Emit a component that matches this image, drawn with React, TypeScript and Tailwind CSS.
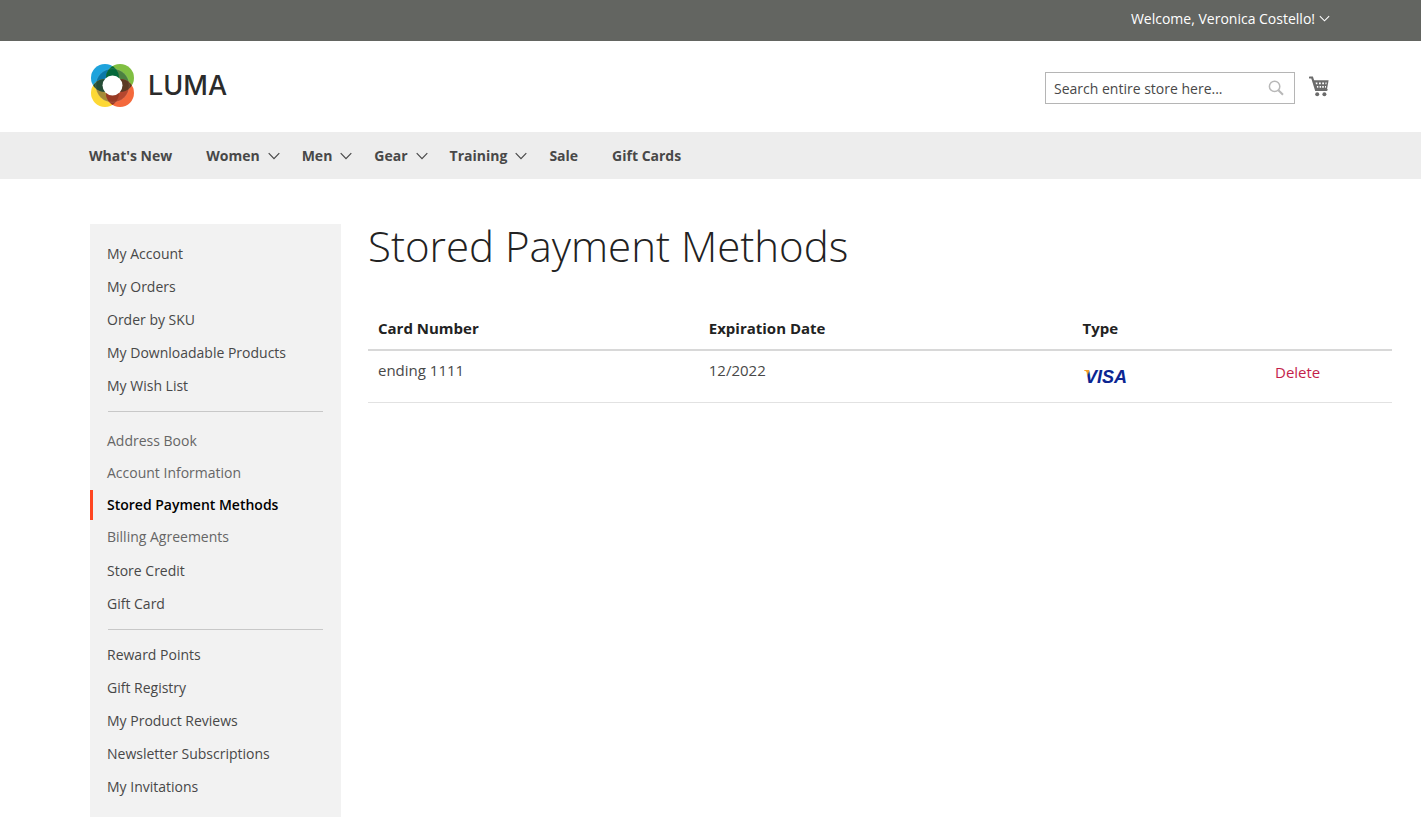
import React from 'react';

type NavItem = { label: string; hasMenu?: boolean };
type AccountLink = { label: string; tone?: 'section' | 'active' };

const navItems: NavItem[] = [
  { label: "What's New" },
  { label: 'Women', hasMenu: true },
  { label: 'Men', hasMenu: true },
  { label: 'Gear', hasMenu: true },
  { label: 'Training', hasMenu: true },
  { label: 'Sale' },
  { label: 'Gift Cards' },
];

const accountLinks: AccountLink[] = [
  { label: 'My Account' },
  { label: 'My Orders' },
  { label: 'Order by SKU' },
  { label: 'My Downloadable Products' },
  { label: 'My Wish List' },
];

const settingsLinks: AccountLink[] = [
  { label: 'Address Book', tone: 'section' },
  { label: 'Account Information', tone: 'section' },
  { label: 'Stored Payment Methods', tone: 'active' },
  { label: 'Billing Agreements', tone: 'section' },
];

const creditLinks: AccountLink[] = [{ label: 'Store Credit' }, { label: 'Gift Card' }];

const activityLinks: AccountLink[] = [
  { label: 'Reward Points' },
  { label: 'Gift Registry' },
  { label: 'My Product Reviews' },
  { label: 'Newsletter Subscriptions' },
  { label: 'My Invitations' },
];

function Chevron({ className }: { className: string }) {
  return (
    <svg viewBox="0 0 12 8" className={className} fill="none" stroke="currentColor" strokeWidth="1.2" aria-hidden="true">
      <path d="M0.7 1.2 6 6.6l5.3-5.4" />
    </svg>
  );
}

function LumaMark() {
  return (
    <svg viewBox="0 0 43 43" className="size-[43px]" aria-hidden="true">
      <defs>
        <clipPath id="tl"><circle cx="14" cy="14" r="14" /></clipPath>
        <clipPath id="tr"><circle cx="29" cy="14" r="14" /></clipPath>
        <clipPath id="bl"><circle cx="14" cy="29" r="14" /></clipPath>
        <clipPath id="br"><circle cx="29" cy="29" r="14" /></clipPath>
        <clipPath id="ring"><circle cx="21.5" cy="21.5" r="16.8" /></clipPath>
      </defs>
      <circle cx="14" cy="14" r="14" fill="#1ea3dc" />
      <circle cx="29" cy="14" r="14" fill="#80bf42" />
      <circle cx="14" cy="29" r="14" fill="#fdd835" />
      <circle cx="29" cy="29" r="14" fill="#f4693c" />
      <g clipPath="url(#ring)">
        <circle cx="14" cy="14" r="14" fill="#0b78a8" />
        <circle cx="29" cy="14" r="14" fill="#4c8040" />
        <circle cx="14" cy="29" r="14" fill="#a58a36" />
        <circle cx="29" cy="29" r="14" fill="#b5472e" />
      </g>
      <g clipPath="url(#tl)"><circle cx="29" cy="14" r="14" fill="#04683a" /></g>
      <g clipPath="url(#tl)"><circle cx="14" cy="29" r="14" fill="#254d37" /></g>
      <g clipPath="url(#br)"><circle cx="29" cy="14" r="14" fill="#5b3a24" /></g>
      <g clipPath="url(#br)"><circle cx="14" cy="29" r="14" fill="#983a24" /></g>
      <circle cx="21.5" cy="21.5" r="16.8" fill="none" stroke="#ffffff" strokeOpacity="0.3" strokeWidth="0.4" />
      <circle cx="21.5" cy="21.5" r="10" fill="#ffffff" />
    </svg>
  );
}

function CartIcon() {
  return (
    <svg viewBox="0 0 20 21" className="h-[21px] w-5" aria-hidden="true">
      <path d="M0.9 1.5h2.2L7 13.8h10.6" fill="none" stroke="#6b6b6b" strokeWidth="2.2" strokeLinecap="round" />
      <path d="M4.2 4.2H19.6L18 13.2H6.9Z" fill="#6b6b6b" />
      <g fill="#ffffff">
        <path d="M6.6 6.5h1.8v1.8H7zM10 6.5h1.8v1.8H10zM13.2 6.5H15v1.8h-1.8zM16.4 6.5h1.3l-.3 1.8h-1z" />
        <path d="M7.8 10h1.5v1.7H8.2zM10.6 10h1.5v1.7h-1.5zM13.2 10h1.6v1.7h-1.6zM16 10h1.1l-.3 1.7H16z" />
      </g>
      <circle cx="8.2" cy="18.3" r="2" fill="#6b6b6b" />
      <circle cx="15.4" cy="18.3" r="2" fill="#6b6b6b" />
    </svg>
  );
}

function VisaLogo() {
  return (
    <svg viewBox="0 0 48 26" className="h-[26px] w-12" role="img" aria-label="Visa">
      <defs>
        <linearGradient id="visa" gradientUnits="userSpaceOnUse" x1="3" y1="7" x2="8" y2="10">
          <stop offset="0.4" stopColor="#f7a128" />
          <stop offset="0.7" stopColor="#0d2490" />
        </linearGradient>
      </defs>
      <path d="M1 6H5.5L6.5 12Q5 8 1 6.6Z" fill="#f7a128" />
      <text x="2" y="19" fill="url(#visa)" fontFamily="Liberation Sans, sans-serif" fontSize="18" fontWeight="700" fontStyle="italic">
        VISA
      </text>
    </svg>
  );
}

function LinkList({ links }: { links: AccountLink[] }) {
  return (
    <ul>
      {links.map(({ label, tone }) => (
        <li key={label}>
          {tone === 'active' ? (
            <div className="flex h-8 items-center">
              <a
                href="#"
                aria-current="page"
                className="flex h-[30px] flex-1 items-center border-l-3 border-[#ff4621] pl-3.5 font-semibold text-black"
              >
                {label}
              </a>
            </div>
          ) : tone === 'section' ? (
            <a href="#" className="flex h-8 items-center pl-[17px] text-[#666]">
              {label}
            </a>
          ) : (
            <a href="#" className="flex h-[33px] items-center pl-[17px]">
              {label}
            </a>
          )}
        </li>
      ))}
    </ul>
  );
}

export default function App() {
  return (
    <div className="min-h-screen bg-white font-['Open_Sans',sans-serif] text-sm text-[#484848]">
      <div className="flex h-[41px] items-center justify-end bg-[#636561] px-[91px] pb-1">
        <button type="button" className="flex items-center gap-1 text-white">
          Welcome, Veronica Costello!
          <Chevron className="h-[7px] w-[11px]" />
        </button>
      </div>

      <header className="flex h-[91px] items-center justify-between pr-[92px] pl-[91px]">
        <a href="#" className="flex items-center gap-3.5 pb-0.5" aria-label="Luma">
          <LumaMark />
          <span className="font-['Inter',sans-serif] text-[27px] leading-8 font-medium text-[#2b2b2b]">LUMA</span>
        </a>
        <div className="flex items-center gap-3.5 pt-0.5">
          <form className="flex h-8 w-[250px] items-center border border-[#b5b5b5] pr-2.5 pl-2" role="search">
            <input
              type="text"
              aria-label="Search"
              placeholder="Search entire store here..."
              className="min-w-0 flex-1 bg-transparent pt-0.5 text-sm outline-none placeholder:text-[#484848]"
            />
            <button type="submit" aria-label="Search" className="text-[#b8b8b8]">
              <svg viewBox="0 0 16 16" className="size-4" fill="none" stroke="currentColor" aria-hidden="true">
                <circle cx="6.6" cy="6.4" r="5.2" strokeWidth="1.5" />
                <path d="M10.4 10.2 15 14.8" strokeWidth="2" />
              </svg>
            </button>
          </form>
          <a href="#" aria-label="My Cart" className="pb-0.5">
            <CartIcon />
          </a>
        </div>
      </header>

      <nav className="flex h-[47px] items-center gap-[22px] bg-[#ededed] px-[89px] font-bold">
        {navItems.map(({ label, hasMenu }) =>
          hasMenu ? (
            <a key={label} href="#" className="flex items-center gap-2">
              {label}
              <Chevron className="h-2 w-3" />
            </a>
          ) : (
            <a key={label} href="#" className="pr-3">
              {label}
            </a>
          ),
        )}
      </nav>

      <div className="flex items-start gap-[27px] pt-[45px] pr-[29px] pb-[18px] pl-[90px]">
        <aside className="w-[251px] shrink-0 bg-[#f2f2f2] pt-[13px] pb-3.5">
          <LinkList links={accountLinks} />
          <hr className="mx-[18px] mt-[9px] mb-[13px] border-[#c8c8c8]" />
          <LinkList links={settingsLinks} />
          <div className="pt-px">
            <LinkList links={creditLinks} />
          </div>
          <hr className="mx-[18px] mt-[9px] mb-2 border-[#c8c8c8]" />
          <LinkList links={activityLinks} />
        </aside>

        <main className="min-w-0 flex-1">
          <h1 className="text-[42px] leading-[44px] font-light text-[#222]">Stored Payment Methods</h1>
          <table className="mt-10 w-full table-fixed text-left text-[15px]">
            <colgroup>
              <col className="w-[32.3%]" />
              <col className="w-[36.5%]" />
              <col className="w-[18.8%]" />
              <col />
            </colgroup>
            <thead>
              <tr className="h-[42px] border-b-2 border-[#d8d8d8] text-[#222]">
                <th className="px-2.5 font-bold">Card Number</th>
                <th className="px-2.5 font-bold">Expiration Date</th>
                <th className="px-2.5 font-bold">Type</th>
                <th aria-label="Actions" />
              </tr>
            </thead>
            <tbody>
              <tr className="h-[52px] border-b border-[#e2e2e2] align-top">
                <td className="px-2.5 pt-[9px]">ending 1111</td>
                <td className="px-2.5 pt-[9px]">12/2022</td>
                <td className="px-2.5 pt-[13px]"><VisaLogo /></td>
                <td className="px-2.5 pt-[11px]">
                  <button type="button" className="text-[#c41e4a]">Delete</button>
                </td>
              </tr>
            </tbody>
          </table>
        </main>
      </div>
    </div>
  );
}
